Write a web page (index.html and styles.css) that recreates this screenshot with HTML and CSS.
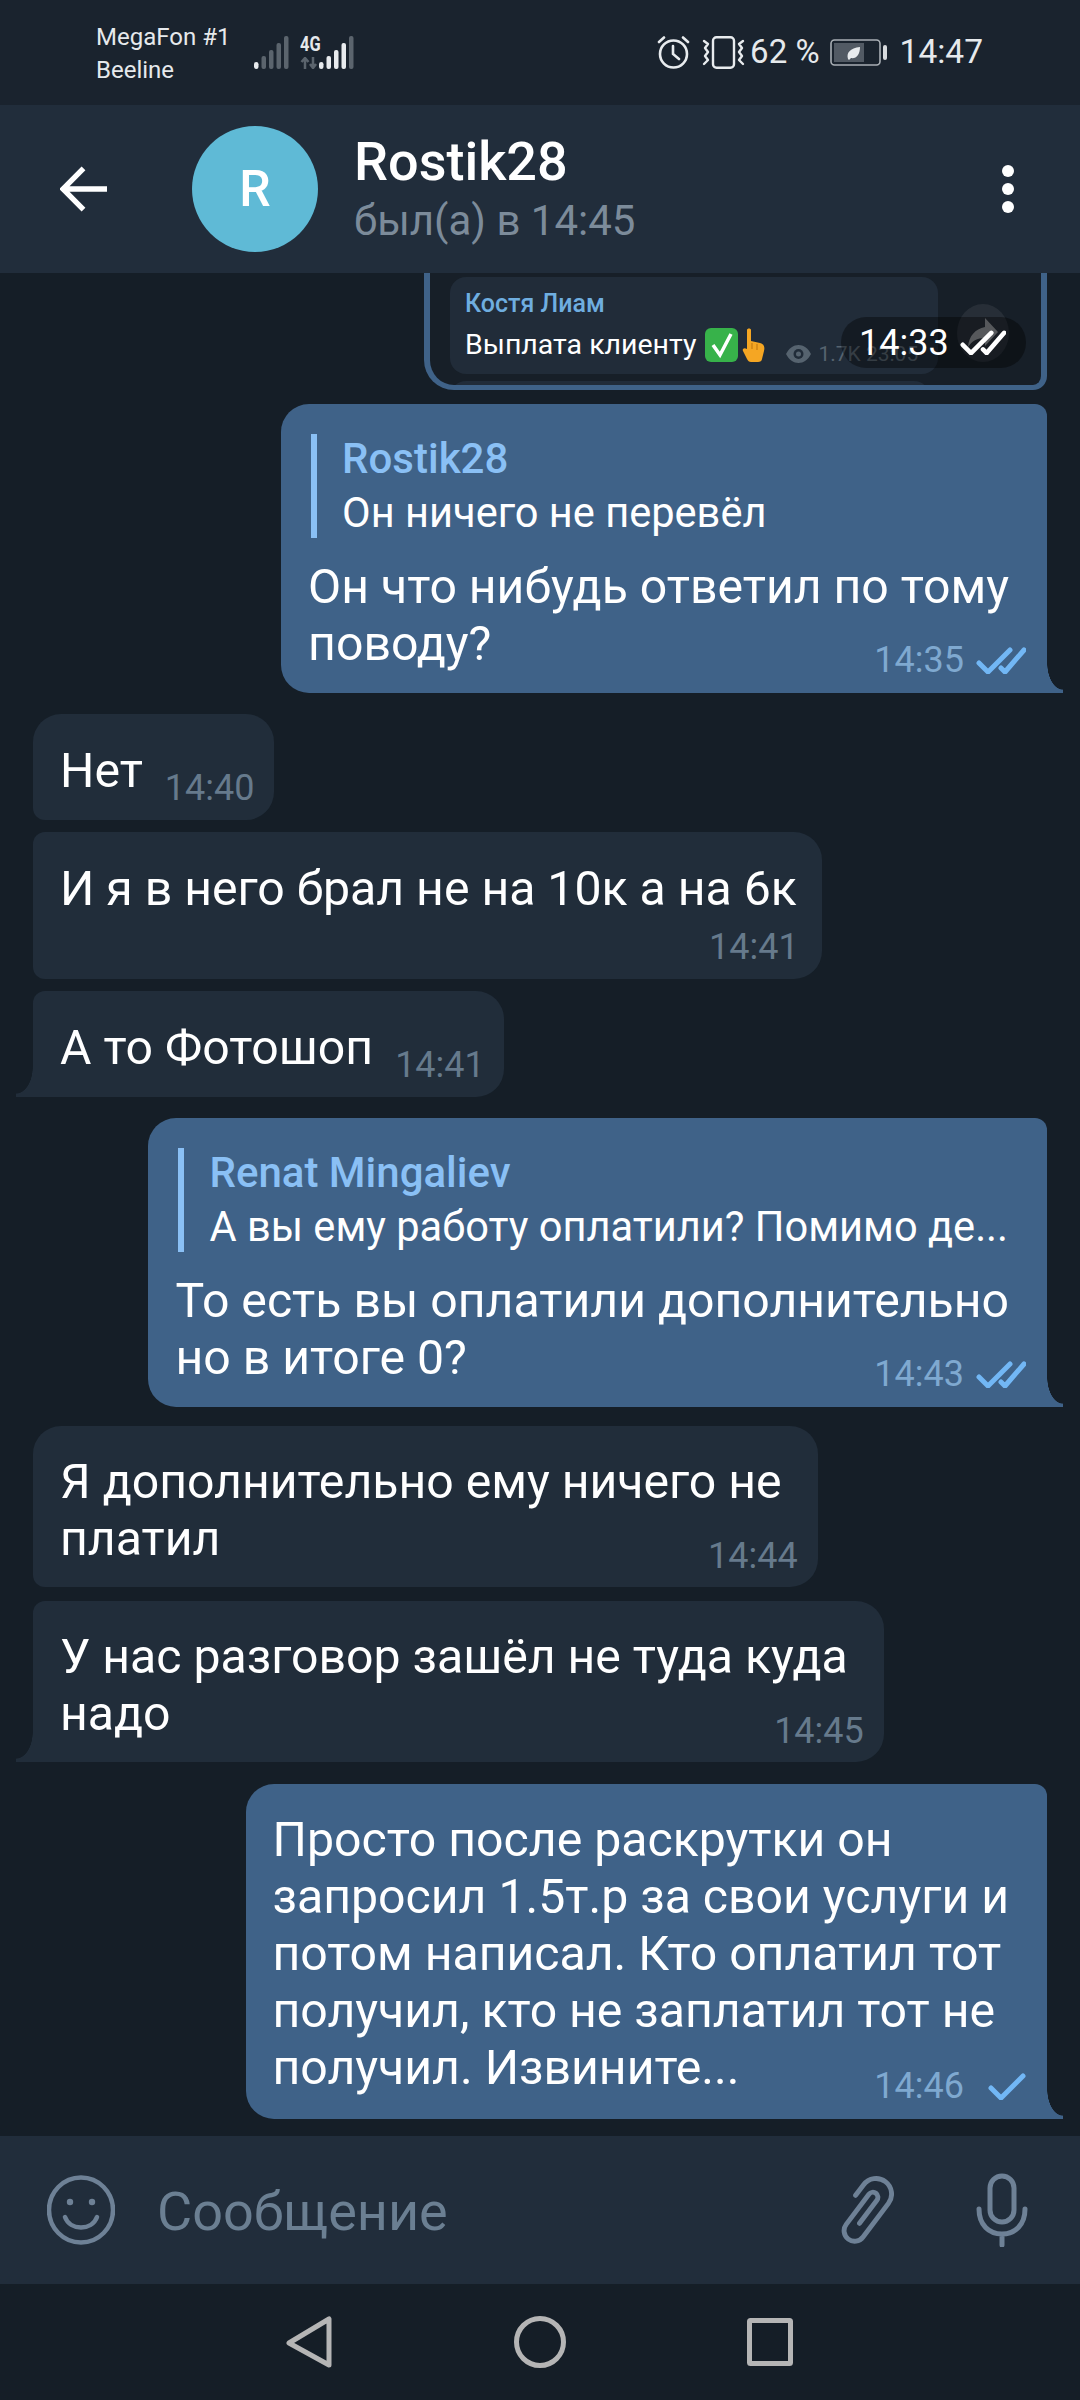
FILE: index.html
```html
<!DOCTYPE html>
<html lang="ru">
<head>
<meta charset="utf-8">
<title>Rostik28</title>
<link rel="stylesheet" href="styles.css">
</head>
<body>
<div class="screen">
  <div class="statusbar">
    <div class="status-left">
      <div class="carriers"><span>MegaFon #1</span><span>Beeline</span></div>
      <svg class="sig" viewBox="0 0 35 33"><rect x="0" y="26" width="4.5" height="7" rx="2.2" fill="#e8ebee"/><rect x="7.5" y="20" width="4.5" height="13" rx="2" fill="#5b646d"/><rect x="15" y="14" width="4.5" height="19" rx="2" fill="#5b646d"/><rect x="22.5" y="7" width="4.5" height="26" rx="2" fill="#5b646d"/><rect x="30" y="0" width="4.5" height="33" rx="2" fill="#5b646d"/></svg>
      <div class="net"><span class="net-label">4G</span>
        <svg class="net-arrows" viewBox="0 0 19 12"><path d="M5 12V1M1.500 5L5 1l3.500 4" fill="none" stroke="#5b646d" stroke-width="2.500"/><path d="M13 0v11M10 7l3 4 3-4" fill="none" stroke="#5b646d" stroke-width="2.500"/></svg>
      </div>
      <svg class="sig sig2" viewBox="0 0 35 33"><rect x="0" y="26" width="4.500" height="7" rx="2.200" fill="#e8ebee"/><rect x="7.500" y="20" width="4.500" height="13" rx="2" fill="#e8ebee"/><rect x="15" y="14" width="4.500" height="19" rx="2" fill="#e8ebee"/><rect x="22.500" y="7" width="4.500" height="26" rx="2" fill="#e8ebee"/><rect x="30" y="0" width="4.500" height="33" rx="2" fill="#5b646d"/></svg>
    </div>
    <div class="status-right">
      <svg class="alarm" viewBox="0 0 33 33" fill="none" stroke="#e8ebee" stroke-width="2.600" stroke-linecap="round"><circle cx="16.500" cy="18" r="13.500"/><path d="M16 10v8l6 5M2 6l5-4.500M31 6l-5-4.500"/></svg>
      <svg class="vib" viewBox="0 0 43 33" fill="none" stroke="#e8ebee" stroke-width="2.400" stroke-linecap="round" stroke-linejoin="round"><rect x="11" y="1.200" width="21" height="30.600" rx="3.500"/><path d="M2 5l4 3-3 4 3 4-3 4 3 4-4 4M41 5l-4 3 3 4-3 4 3 4-3 4 4 4"/></svg>
      <span class="pct">62 %</span>
      <svg class="batt" viewBox="0 0 58 27"><rect x="1" y="1" width="49" height="25" rx="3.500" fill="none" stroke="#a9afb5" stroke-width="1.600"/><rect x="4" y="4" width="30" height="19" fill="#525a64"/><rect x="53" y="6" width="4" height="15" rx="2" fill="#d8dbde"/><path d="M18 20c-2-6 2-11 12-12 0 8-4 12-9 11l-2 2z" fill="#e8ebee"/></svg>
      <span class="clock">14:47</span>
    </div>
  </div>

  <header class="topbar">
    <svg class="back" viewBox="0 0 48 46" fill="none" stroke="#fff" stroke-width="5.500"><path d="M24 2L3 23l21 21M3 23h45"/></svg>
    <div class="avatar">R</div>
    <div class="peer">
      <div class="peer-name">Rostik28</div>
      <div class="peer-seen">был(а) в 14:45</div>
    </div>
    <div class="dots"><i></i><i></i><i></i></div>
  </header>

  <main class="chat">
    <div class="shot">
      <div class="shot-card">
        <div class="shot-name">Костя Лиам</div>
        <div class="shot-row">
          <span class="shot-text">Выплата клиенту</span>
          <svg class="em-check" viewBox="0 0 33 34"><rect width="33" height="34" rx="6" fill="#37b24a"/><path d="M8 17l7 10L26 6" fill="none" stroke="#fff" stroke-width="3.500"/></svg>
          <svg class="em-hand" viewBox="0 0 24 34"><path d="M5 2c0-2 4-2 4 0v11l9 2c4 1 5 4 4 8l-2 8c0 2-2 3-4 3H9c-2 0-3-1-4-3l-4-8c-1-2 1-4 4-2z" fill="#f5a623"/><path d="M10 15v6M15 16v6" stroke="#c77c10" stroke-width="1.200"/></svg>
          <svg class="eye" viewBox="0 0 25 18"><path d="M0 9c6-12 19-12 25 0-6 12-19 12-25 0z" fill="#56636f"/><circle cx="12.500" cy="9" r="5" fill="#212c39"/><circle cx="12.500" cy="9" r="2.500" fill="#56636f"/></svg>
          <span class="shot-views">1.7K 23:05</span>
        </div>
      </div>
      <div class="shot-card2"></div>
      <div class="shot-share"><svg viewBox="0 0 30 30"><path d="M17 0l13 14-13 14v-8C9 20 4 23 0 29c1-11 7-18 17-20z" fill="#8b8f93"/></svg></div>
      <div class="shot-pill"><span>14:33</span>
        <svg class="ticks" viewBox="0 0 50 27" fill="none" stroke="#fff" stroke-width="5" stroke-linecap="round" stroke-linejoin="round"><path d="M3 16l9 9L34 3M25 21l4 4L48 3"/></svg>
      </div>
    </div>

    <div class="msg out">
      <div class="reply"><div class="reply-name">Rostik28</div><div class="reply-text">Он ничего не перевёл</div></div>
      <div class="text">Он что нибудь ответил по тому<br>поводу?</div>
      <div class="meta overlap"><span>14:35</span>
        <svg class="ticks" viewBox="0 0 50 27" fill="none" stroke="#72b7f5" stroke-width="5" stroke-linecap="round" stroke-linejoin="round"><path d="M3 16l9 9L34 3M25 21l4 4L48 3"/></svg>
      </div>
    </div>

    <div class="msg in row first top">
      <div class="text">Нет</div>
      <div class="meta"><span>14:40</span></div>
    </div>
    <div class="msg in below">
      <div class="text">И я в него брал не на 10к а на 6к</div>
      <div class="meta"><span>14:41</span></div>
    </div>
    <div class="msg in row tail">
      <div class="text">А то Фотошоп</div>
      <div class="meta"><span>14:41</span></div>
    </div>

    <div class="msg out first">
      <div class="reply"><div class="reply-name">Renat Mingaliev</div><div class="reply-text">А вы ему работу оплатили? Помимо де...</div></div>
      <div class="text">То есть вы оплатили дополнительно<br>но в итоге 0?</div>
      <div class="meta overlap"><span>14:43</span>
        <svg class="ticks" viewBox="0 0 50 27" fill="none" stroke="#72b7f5" stroke-width="5" stroke-linecap="round" stroke-linejoin="round"><path d="M3 16l9 9L34 3M25 21l4 4L48 3"/></svg>
      </div>
    </div>

    <div class="msg in multi first2 top">
      <div class="text">Я дополнительно ему ничего не<br>платил</div>
      <div class="meta"><span>14:44</span></div>
    </div>
    <div class="msg in multi tail next">
      <div class="text">У нас разговор зашёл не туда куда<br>надо</div>
      <div class="meta"><span>14:45</span></div>
    </div>

    <div class="msg out last plain">
      <div class="text">Просто после раскрутки он<br>запросил 1.5т.р за свои услуги и<br>потом написал. Кто оплатил тот<br>получил, кто не заплатил тот не<br>получил. Извините...</div>
      <div class="meta"><span>14:46</span>
        <svg class="tick" viewBox="0 0 38 27" fill="none" stroke="#72b7f5" stroke-width="5" stroke-linecap="round" stroke-linejoin="round"><path d="M3 15l10 10L35 3"/></svg>
      </div>
    </div>
  </main>

  <div class="composer">
    <svg class="ic-smile" viewBox="0 0 68 70" fill="none" stroke="#6e8196" stroke-width="4.500" stroke-linecap="round"><ellipse cx="34" cy="35" rx="32" ry="32.500"/><path d="M18 42c5 14 27 14 32 0"/><circle cx="23" cy="27" r="3.200" fill="#6e8196" stroke="none"/><circle cx="45" cy="27" r="3.200" fill="#6e8196" stroke="none"/></svg>
    <span class="placeholder">Сообщение</span>
    <svg class="ic-clip" viewBox="-30 -34 60 68" fill="none" stroke="#6e8196" stroke-width="4.400" stroke-linecap="round"><path transform="rotate(37) scale(1.110)" d="M-14-6V-18A14 14 0 0 1 14-18V20A9.500 9.500 0 0 1-5 20V-14A4.500 4.500 0 0 1 4-14V12"/></svg>
    <svg class="ic-mic" viewBox="0 0 52 74" fill="none" stroke="#6e8196" stroke-width="5" stroke-linecap="round"><rect x="14" y="3" width="24" height="46" rx="12"/><path d="M3 36c0 16 10 25 23 25s23-9 23-25M26 61v11"/></svg>
  </div>

  <nav class="navbar">
    <svg class="nav-back" viewBox="0 0 46 52" fill="none" stroke="#b5b5b5" stroke-width="5" stroke-linejoin="round"><path d="M43 3v46L3 27z"/></svg>
    <svg class="nav-home" viewBox="0 0 52 52" fill="none" stroke="#b5b5b5" stroke-width="5"><circle cx="26" cy="26" r="23.500"/></svg>
    <svg class="nav-rec" viewBox="0 0 46 48" fill="none" stroke="#b5b5b5" stroke-width="5" stroke-linejoin="round"><rect x="2.500" y="2.500" width="41" height="43" rx="1"/></svg>
  </nav>
</div>
</body>
</html>
```

FILE: styles.css
```css
* { box-sizing: border-box; }
html, body { margin: 0; padding: 0; background: #151e27; }
body { font-family: Roboto, "Noto Sans", sans-serif; color: #fff; }
svg { display: block; flex: none; }

.screen { width: 1080px; height: 2400px; display: flex; flex-direction: column; overflow: hidden; }

/* status bar */
.statusbar { height: 105px; flex: none; background: #1a232e; color: #e6e9ec; display: flex; justify-content: space-between; align-items: flex-start; padding: 36px 97px 0 96px; }
.status-left, .status-right { display: flex; align-items: flex-start; }
.carriers { display: flex; flex-direction: column; font-size: 24px; line-height: 33px; width: 158px; margin-top: -15px; }
.sig { width: 35px; height: 33px; }
.net { width: 30px; margin-left: 11px; display: flex; flex-direction: column; }
.net-label { font-size: 20px; line-height: 14px; font-weight: 700; color: #e6e9ec; width: 19px; transform: scaleX(0.82); transform-origin: left; margin-top: 1px; }
.net-arrows { width: 19px; height: 12px; margin-top: 6px; }
.net + .sig2 { margin-left: -11px; }
.alarm { width: 33px; height: 33px; }
.vib { width: 43px; height: 33px; margin-left: 12px; }
.pct, .clock { line-height: 38px; margin-top: -3px; }
.pct { font-size: 33px; margin-left: 5px; }
.clock { font-size: 33.500px; margin-left: 12px; }
.batt { width: 58px; height: 27px; margin: 3px 0 0 10px; }

/* header */
.topbar { height: 168px; flex: none; background: #212d3b; display: flex; align-items: center; padding-left: 60px; padding-right: 66px; }
.back { width: 47px; height: 46px; }
.avatar { width: 126px; height: 126px; border-radius: 50%; background: #5fbad6; margin-left: 85px; display: flex; align-items: center; justify-content: center; font-size: 50px; font-weight: 500; }
.peer { margin-left: 37px; flex: 1; }
.peer-name { font-size: 54px; line-height: 60px; font-weight: 500; margin-left: -1px; }
.peer-seen { font-size: 42px; line-height: 50px; color: #7c8b9a; margin-top: 4px; margin-left: -1px; }
.dots { display: flex; flex-direction: column; gap: 6px; }
.dots i { width: 12px; height: 12px; border-radius: 50%; background: #fff; display: block; }

/* chat */
.chat { flex: 1; min-height: 0; overflow: hidden; display: flex; flex-direction: column; padding: 0 33px; gap: 12px; }

.shot { position: relative; flex: none; height: 117px; width: 623px; align-self: flex-end; background: #171f28; border: solid #3f6288; border-width: 0 6px 5px; border-radius: 0 0 14px 30px; padding: 4px 0 0 20px; overflow: hidden; }
.shot + .msg { margin-top: 2px; }
.shot-card { height: 97px; width: 488px; background: #212c39; border-radius: 16px; padding: 12px 15px 0; }
.shot-card2 { height: 20px; width: 480px; margin-top: 7px; background: #212c39; border-radius: 16px 16px 0 0; }
.shot-name { font-size: 25px; line-height: 30px; font-weight: 500; color: #6faee0; }
.shot-row { display: flex; align-items: flex-start; margin-top: 9px; }
.shot-text { font-size: 28.500px; line-height: 34px; white-space: nowrap; }
.em-check { width: 33px; height: 34px; margin-left: 9px; }
.em-hand { width: 24px; height: 34px; margin-left: 4px; }
.eye { width: 25px; height: 18px; margin: 17px 0 0 20px; }
.shot-views { font-size: 21px; line-height: 26px; color: #56636f; margin: 13px 0 0 7px; white-space: nowrap; }
.shot-share { position: absolute; left: 527px; top: 31px; width: 52px; height: 58px; border-radius: 50%; background: rgba(255, 255, 255, 0.07); display: flex; align-items: center; justify-content: center; }
.shot-share svg { width: 30px; height: 30px; }
.shot-pill { position: absolute; left: 411px; top: 44px; width: 185px; height: 51px; border-radius: 25px; background: rgba(0, 0, 0, 0.38); display: flex; align-items: center; padding-left: 18px; font-size: 36px; gap: 11px; }
.shot-pill .ticks { width: 46px; height: 25px; }

/* messages */
.msg { position: relative; flex: none; align-self: flex-start; display: flex; flex-direction: column; white-space: nowrap; }
.text { font-size: 48.200px; line-height: 57px; }
.meta { display: flex; align-items: center; justify-content: flex-end; height: 40px; gap: 12px; font-size: 36px; flex: none; }

.in { background: #212d3a; padding: 28px 25px 12px 27px; border-radius: 12px 28px 28px 12px; }
.in .meta { color: #667a8c; }
.in.top { border-top-left-radius: 28px; }
.in.row { flex-direction: row; align-items: flex-end; padding-right: 19px; }
.in.row .text { margin-bottom: 9px; }
.in.row .meta { margin-left: 22px; }
.in.below .meta { margin: 10px -2px 0 0; }
.in.multi { padding: 27px 36px 11px 27px; }
.in.multi .meta { margin: -31px -16px 0 0; }
.in.tail { border-bottom-left-radius: 0; }
.in.tail::after { content: ""; position: absolute; left: -17px; bottom: 0; width: 17px; height: 30px; background: radial-gradient(ellipse 17px 27px at 0 0, transparent 97%, #212d3a 100%); }

.out { align-self: flex-end; background: #3f6288; padding: 30px 38px 13px 27px; border-radius: 28px 12px 0 28px; }
.out .meta { color: #7fa9d0; margin-right: -17px; }
.overlap { margin-top: -32px; }
.out.plain { padding-top: 27px; }
.out.plain .meta { margin-top: -30px; }
.out::after { content: ""; position: absolute; right: -16px; bottom: 0; width: 16px; height: 30px; background: radial-gradient(ellipse 16px 27px at 100% 0, transparent 97%, #3f6288 100%); }

.first { margin-top: 9px; }
.first2 { margin-top: 7px; }
.next { margin-top: 2px; }
.last { margin-top: 10px; }

.reply { border-left: 6px solid #8ac0f5; margin-left: 3px; padding-left: 25px; height: 104px; margin-bottom: 20px; display: flex; flex-direction: column; }
.reply-name { font-size: 42px; line-height: 50px; font-weight: 500; color: #8ac0f5; }
.reply-text { font-size: 41.600px; line-height: 54px; margin-top: 2px; }

.ticks { width: 50px; height: 27px; }
.tick { width: 38px; height: 27px; margin-left: 12px; }

/* composer */
.composer { height: 148px; flex: none; background: #212d3b; display: flex; align-items: center; padding: 0 52px 0 47px; }
.ic-smile { width: 68px; height: 70px; }
.placeholder { font-size: 54px; color: #6b7f92; margin: 3px 0 0 42px; flex: 1; }
.ic-clip { width: 60px; height: 68px; }
.ic-mic { width: 52px; height: 74px; margin-left: 82px; }

/* nav */
.navbar { height: 116px; flex: none; background: #151e27; display: flex; align-items: center; padding-left: 286px; }
.nav-back { width: 46px; height: 52px; }
.nav-home { width: 52px; height: 52px; margin-left: 182px; }
.nav-rec { width: 46px; height: 48px; margin-left: 181px; }
```
